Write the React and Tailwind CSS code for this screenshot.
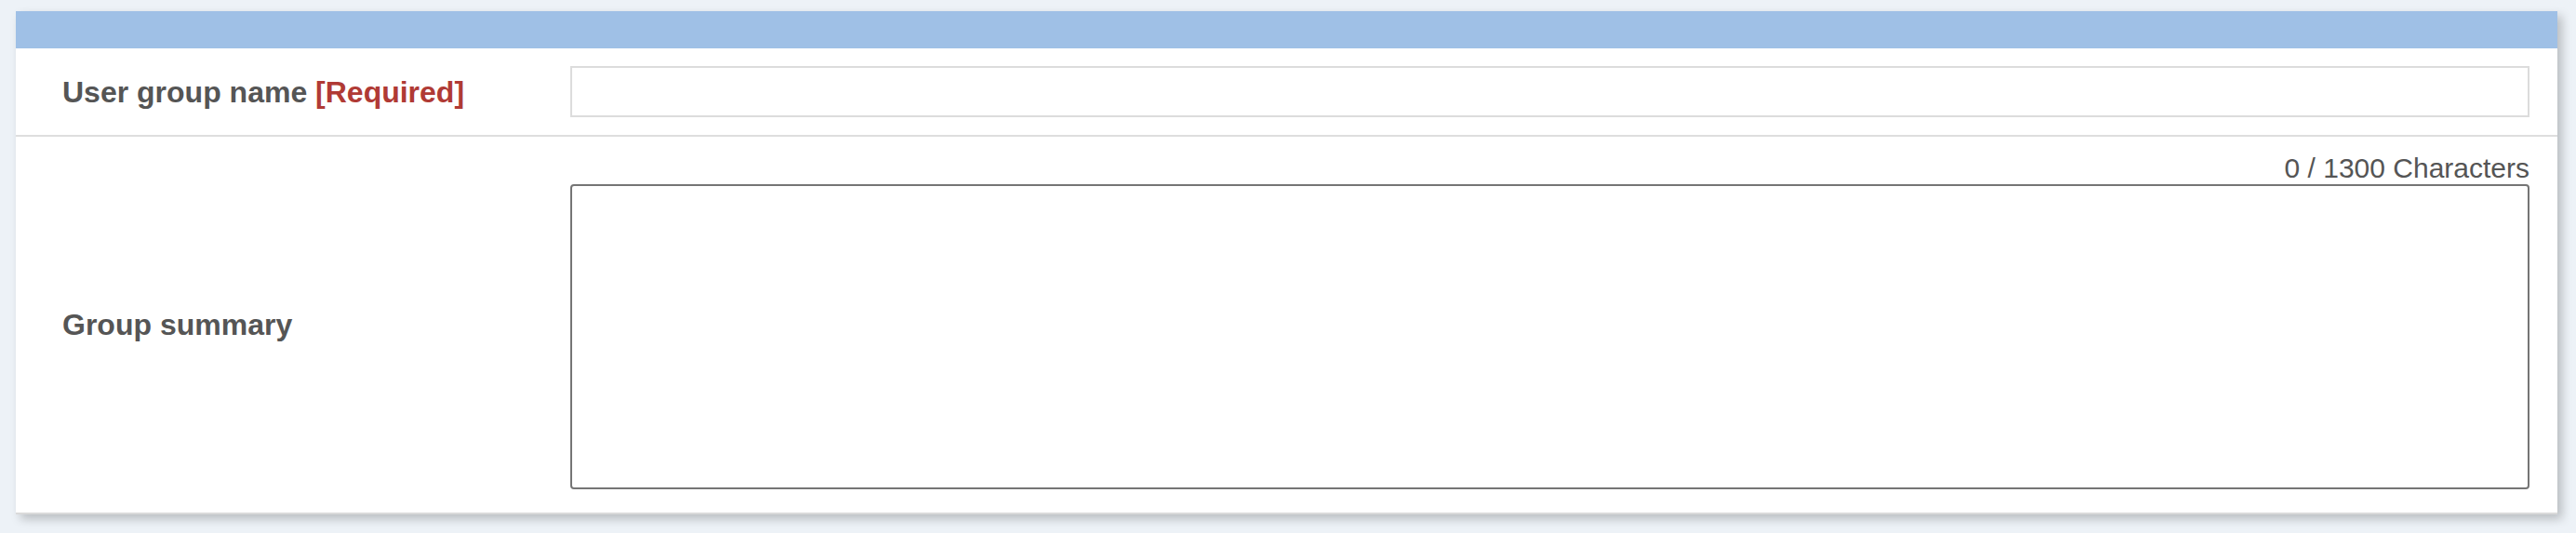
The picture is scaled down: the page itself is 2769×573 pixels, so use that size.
export default function App() {
  return (
    <div className="min-h-screen bg-[#edf2f7] pt-[12px] pl-[17px] pr-[20px] font-['Liberation_Sans',Arial,sans-serif] text-[#555555]">
      <div className="bg-white border-b-2 border-[#dadada] shadow-[5px_5px_10px_rgba(0,0,0,0.22)]">
        {/* Header bar */}
        <div className="h-[40px] bg-[#9fc0e6]" />

        {/* User group name */}
        <div className="flex items-center border-b-2 border-[#dedede] pr-[30px]">
          <div className="w-[596px] shrink-0 pl-[50px] text-[32px] font-bold">
            User group name <span className="text-[#b03a35]">[Required]</span>
          </div>
          <div className="flex-1 py-[19px]">
            <input
              type="text"
              className="block w-full h-[55px] border-2 border-[#dcdcdc] bg-white px-3 text-[30px] outline-none"
            />
          </div>
        </div>

        {/* Group summary */}
        <div className="flex items-center pr-[30px]">
          <div className="w-[596px] shrink-0 pl-[50px] text-[32px] font-bold">Group summary</div>
          <div className="flex-1 flex flex-col pt-[17px] pb-[25px]">
            <div className="text-right text-[30px] leading-[34px] text-[#555555]">0 / 1300 Characters</div>
            <textarea className="block h-[328px] w-full resize-none rounded-[4px] border-2 border-[#757575] bg-white p-3 text-[30px] outline-none" />
          </div>
        </div>
      </div>
    </div>
  );
}
